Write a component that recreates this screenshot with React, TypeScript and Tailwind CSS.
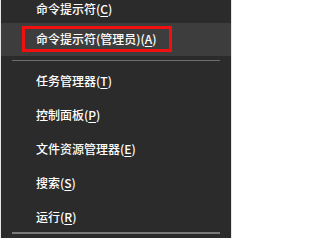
import React from "react";

function Label({ text, k }: { text: string; k: string }) {
  return (
    <span>
      {text}(<span className="underline underline-offset-[2px] decoration-1">{k}</span>)
    </span>
  );
}

export default function App() {
  const font = { fontFamily: '"Noto Sans CJK SC", "Noto Sans", sans-serif' };
  const rows: [string, string][] = [
    ["任务管理器", "T"],
    ["控制面板", "P"],
    ["文件资源管理器", "E"],
    ["搜索", "S"],
    ["运行", "R"],
  ];
  return (
    <div
      className="w-[232px] h-[238px] bg-[#2b2b2b] border-x border-x-[#e6e6e6] text-white text-[12px] leading-[16px] font-medium flex flex-col"
      style={font}
    >
      <div className="h-[23px] pl-[35px] pt-[1px]">
        <Label text="命令提示符" k="C" />
      </div>
      <div className="h-[33px] bg-[#3d3d3d] pt-[3px] pl-[21px]">
        <div className="w-[150px] h-[26px] border-[3px] border-[#f01010] pl-[11px] flex items-center">
          <Label text="命令提示符(管理员)" k="A" />
        </div>
      </div>
      <div className="h-[8px] flex items-center px-[11px]">
        <div className="h-px w-full bg-[#6e6e6e]" />
      </div>
      {rows.map(([t, k]) => (
        <div key={k} className="h-[34px] pl-[35px] flex items-center">
          <Label text={t} k={k} />
        </div>
      ))}
      <div className="px-[11px] mt-[-2px]">
        <div className="h-[2px] w-full bg-[#7a7a7a]" />
      </div>
    </div>
  );
}
